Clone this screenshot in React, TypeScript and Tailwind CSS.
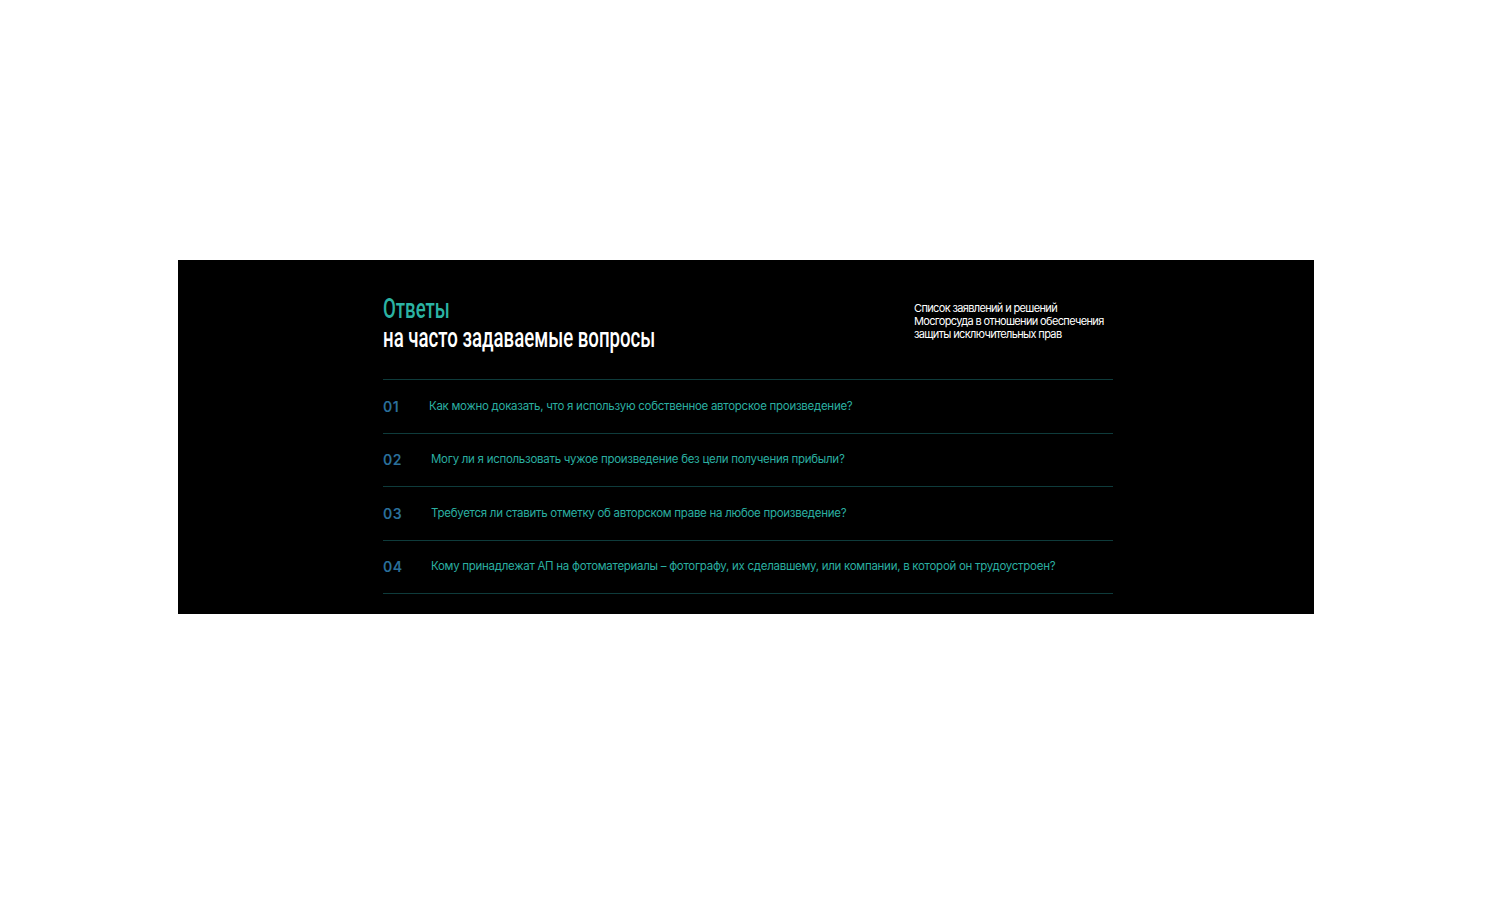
import React from "react";

const items = [
  { n: "01", q: "Как можно доказать, что я использую собственное авторское произведение?", pl: "pl-[46px]" },
  { n: "02", q: "Могу ли я использовать чужое произведение без цели получения прибыли?", pl: "pl-[48px]" },
  { n: "03", q: "Требуется ли ставить отметку об авторском праве на любое произведение?", pl: "pl-[48px]" },
  { n: "04", q: "Кому принадлежат АП на фотоматериалы – фотографу, их сделавшему, или компании, в которой он трудоустроен?", pl: "pl-[48px]" },
];

export default function App() {
  return (
    <div className="w-[1500px] h-[900px] bg-white pt-[260px]">
      <div className="ml-[178px] w-[1136px] h-[354px] bg-black pl-[205px]">
        <div className="w-[730px] pt-[35px]">
          <div className="flex justify-between">
            <div
              className="text-[27px] leading-[29px] font-medium origin-left scale-x-[0.69] whitespace-nowrap"
              style={{ fontFamily: '"Roboto", sans-serif' }}
            >
              <div className="text-[#2bb3a3]">Ответы</div>
              <div className="text-white">на часто задаваемые вопросы</div>
            </div>
            <div
              className="w-[199px] text-[11px] leading-[13px] text-white tracking-[-0.65px] pt-[7px]"
              style={{ fontFamily: '"Inter", "Roboto", sans-serif' }}
            >
              Список заявлений и решений Мосгорсуда в отношении обеспечения защиты исключительных прав
            </div>
          </div>
          <div className="mt-[26px] border-t border-[#0e3b3b]">
            {items.map((it) => (
              <div key={it.n} className="flex items-center h-[53.5px] border-b border-[#0e3b3b]" style={{ fontFamily: '"Inter", "Roboto", sans-serif' }}>
                <div className="w-0 text-[14px] font-semibold text-[#2a6f9a] tracking-[0.5px] whitespace-nowrap">{it.n}</div>
                <div className={`${it.pl} text-[11.5px] text-[#2aafa0] tracking-[-0.28px] whitespace-nowrap`}>{it.q}</div>
              </div>
            ))}
          </div>
        </div>
      </div>
    </div>
  );
}
